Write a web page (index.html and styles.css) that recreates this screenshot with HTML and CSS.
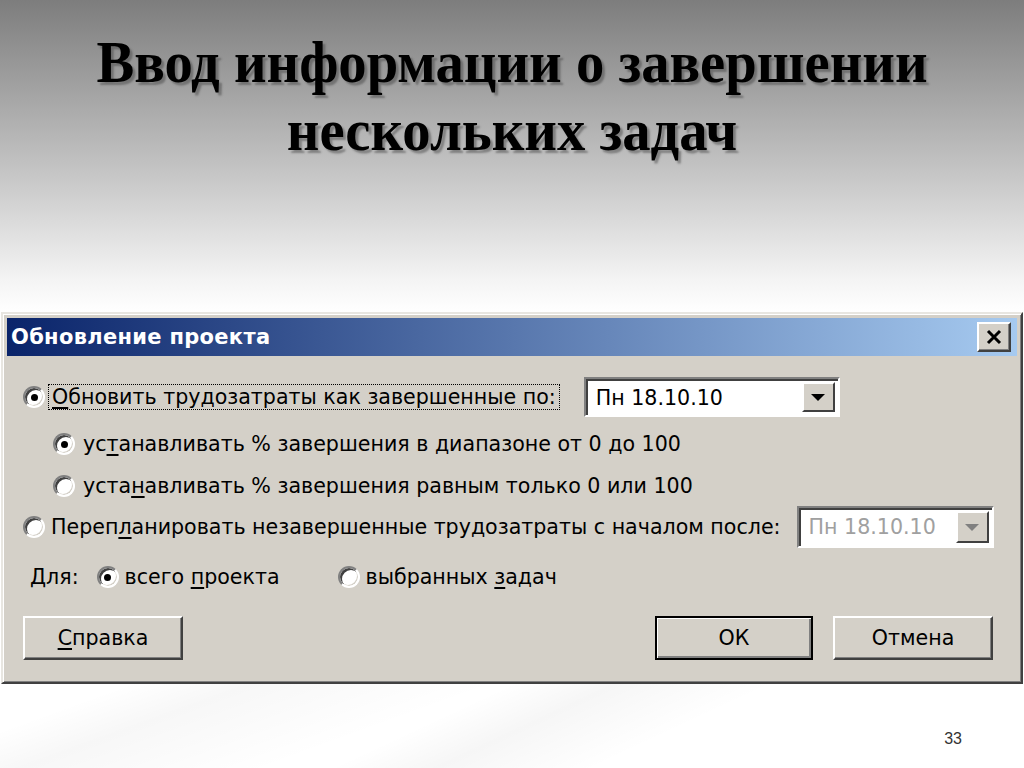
FILE: index.html
```html
<!DOCTYPE html>
<html lang="ru">
<head>
    <meta charset="UTF-8">
    <meta name="viewport" content="width=device-width, initial-scale=1.0">
    <title>Ввод информации о завершении нескольких задач</title>
    <link rel="stylesheet" href="styles.css">
</head>
<body>
    <div class="slide">
        <div class="heading">
            <h1>Ввод информации о завершении<br>нескольких задач</h1>
        </div>

        <div class="dialog">
            <div class="titlebar">
                <span class="title">Обновление проекта</span>
                <button class="close">
                    <svg width="18" height="16" viewBox="0 0 18 16"><path d="M3 2 L15 14 M15 2 L3 14" stroke="#000" stroke-width="3"/></svg>
                </button>
            </div>
            <div class="body">
                <div class="row first">
                    <label class="opt">
                        <span class="radio on"></span>
                        <span class="focus"><u>О</u>бновить трудозатраты как завершенные по:</span>
                    </label>
                    <div class="combo combo-main">
                        <span class="combo-text">Пн 18.10.10</span>
                        <span class="combo-btn"><span class="arrow"></span></span>
                    </div>
                </div>
                <div class="row sub second">
                    <label class="opt">
                        <span class="radio on"></span>
                        <span>ус<u>т</u>анавливать % завершения в диапазоне от 0 до 100</span>
                    </label>
                </div>
                <div class="row sub">
                    <label class="opt">
                        <span class="radio"></span>
                        <span>уста<u>н</u>авливать % завершения равным только 0 или 100</span>
                    </label>
                </div>
                <div class="row last">
                    <label class="opt">
                        <span class="radio"></span>
                        <span>Переп<u>л</u>анировать незавершенные трудозатраты с началом после:</span>
                    </label>
                    <div class="combo combo-off">
                        <span class="combo-text">Пн 18.10.10</span>
                        <span class="combo-btn"><span class="arrow"></span></span>
                    </div>
                </div>
                <div class="row scope">
                    <span class="for">Для:</span>
                    <label class="opt">
                        <span class="radio on"></span>
                        <span>всего <u>п</u>роекта</span>
                    </label>
                    <label class="opt">
                        <span class="radio"></span>
                        <span>выбранных <u>з</u>адач</span>
                    </label>
                </div>
                <div class="buttons">
                    <button class="btn"><u>С</u>правка</button>
                    <span class="spacer"></span>
                    <button class="btn default">ОК</button>
                    <button class="btn">Отмена</button>
                </div>
            </div>
        </div>

        <div class="footer">
            <span class="page">33</span>
        </div>
    </div>
</body>
</html>
```

FILE: styles.css
```css
*, *:before, *:after {
    box-sizing: border-box;
}
body {
    margin: 0;
    background: #ffffff;
}
.slide {
    width: 1024px;
    height: 768px;
    display: flex;
    flex-direction: column;
    background:
        linear-gradient(160deg, transparent 64%, rgba(0,0,0,0.03) 68%, transparent 76%),
        linear-gradient(155deg, transparent 74%, rgba(0,0,0,0.035) 78%, transparent 84%),
        linear-gradient(#7d7d7d 0px, #c4c4c4 170px, #f4f4f4 280px, #ffffff 312px);
    overflow: hidden;
}
.heading {
    height: 312px;
    padding-top: 28px;
    text-align: center;
}
h1 {
    margin: 0;
    font-family: "Liberation Serif", serif;
    font-weight: bold;
    font-size: 59px;
    line-height: 68px;
    color: #000;
    text-shadow: 3px 3px 2px rgba(60,60,60,0.45);
    transform: scaleX(0.96);
}

/* dialog */
.dialog {
    margin: 0 1px 0 1px;
    height: 372px;
    background: #d4d0c8;
    border: 2px solid;
    border-color: #e8e6e1 #404040 #404040 #e8e6e1;
    box-shadow: inset 1px 1px 0 #fff, inset -1px -1px 0 #808080;
    padding: 4px 4px;
    font-family: "DejaVu Sans", sans-serif;
    font-size: 20.6px;
    color: #000;
}
.titlebar {
    height: 38px;
    display: flex;
    align-items: center;
    justify-content: space-between;
    padding: 0 6px 0 4px;
    background: linear-gradient(90deg, #0a246a, #a6caf0);
}
.title {
    color: #fff;
    font-weight: bold;
    font-size: 21px;
    letter-spacing: 0.3px;
}
.close {
    width: 34px;
    height: 30px;
    padding: 0;
    background: #d4d0c8;
    border: 2px solid;
    border-color: #fff #404040 #404040 #fff;
    box-shadow: inset -1px -1px 0 #808080;
    display: flex;
    align-items: center;
    justify-content: center;
}
.body {
    padding: 20px 16px 0 16px;
}
.row {
    display: flex;
    align-items: center;
    height: 42px;
}
.row.second {
    margin-top: 5px;
}
.row.sub {
    padding-left: 30px;
}
.row.sub .opt {
    gap: 8px;
}
.row.last {
    height: 40px;
}
.row.scope {
    height: 44px;
    padding-left: 7px;
    margin-top: 8px;
}
.opt {
    display: flex;
    align-items: center;
    gap: 6px;
    white-space: nowrap;
}
.first .opt {
    gap: 4px;
}
.focus {
    outline: 1px dotted #000;
    outline-offset: 0;
    padding: 0 3px;
}
u {
    text-decoration-thickness: 2px;
    text-underline-offset: 3px;
}
.radio {
    width: 22px;
    height: 22px;
    border-radius: 50%;
    background: #fff;
    border: 2px solid;
    border-color: #808080 #ffffff #ffffff #808080;
    box-shadow: inset 2px 2px 0 #404040, inset -1px -1px 0 #d4d0c8;
    display: flex;
    align-items: center;
    justify-content: center;
    flex: none;
}
.radio.on:after {
    content: "";
    width: 7px;
    height: 7px;
    border-radius: 50%;
    background: #000;
}
.combo {
    display: flex;
    background: #fff;
    border: 2px solid;
    border-color: #808080 #fff #fff #808080;
    box-shadow: inset 2px 2px 0 #404040;
    padding: 3px 3px 3px 0;
}
.combo-main {
    margin-left: 25px;
    width: 256px;
    height: 40px;
}
.combo-off {
    margin-left: 16px;
    width: 197px;
    height: 42px;
}
.combo-text {
    flex: 1;
    padding-left: 10px;
    line-height: 32px;
}
.combo-off .combo-text {
    color: #a0a0a0;
}
.combo-btn {
    width: 33px;
    background: #d4d0c8;
    border: 2px solid;
    border-color: #fff #404040 #404040 #fff;
    display: flex;
    align-items: center;
    justify-content: center;
}
.arrow {
    width: 0;
    height: 0;
    border-left: 7px solid transparent;
    border-right: 7px solid transparent;
    border-top: 7px solid #000;
}
.combo-off .arrow {
    border-top-color: #808080;
}
.for {
    margin-right: 18px;
}
.scope .opt + .opt {
    margin-left: 58px;
}
.buttons {
    display: flex;
    margin-top: 17px;
    padding-right: 8px;
}
.spacer {
    flex: 1;
}
.btn {
    width: 160px;
    height: 44px;
    background: #d4d0c8;
    font-family: "DejaVu Sans", sans-serif;
    font-size: 20.6px;
    color: #000;
    padding: 0;
    border: 2px solid;
    border-color: #fff #404040 #404040 #fff;
    box-shadow: inset -1px -1px 0 #808080;
}
.btn + .btn {
    margin-left: 20px;
}
.btn.default {
    width: 158px;
    border: 2px solid #000;
    box-shadow: inset 1px 1px 0 #fff, inset -2px -2px 0 #808080;
}
.footer {
    flex: 1;
    display: flex;
    justify-content: flex-end;
    padding: 46px 62px 0 0;
}
.page {
    font-family: "Liberation Sans", sans-serif;
    font-size: 16px;
    color: #333;
}
```
